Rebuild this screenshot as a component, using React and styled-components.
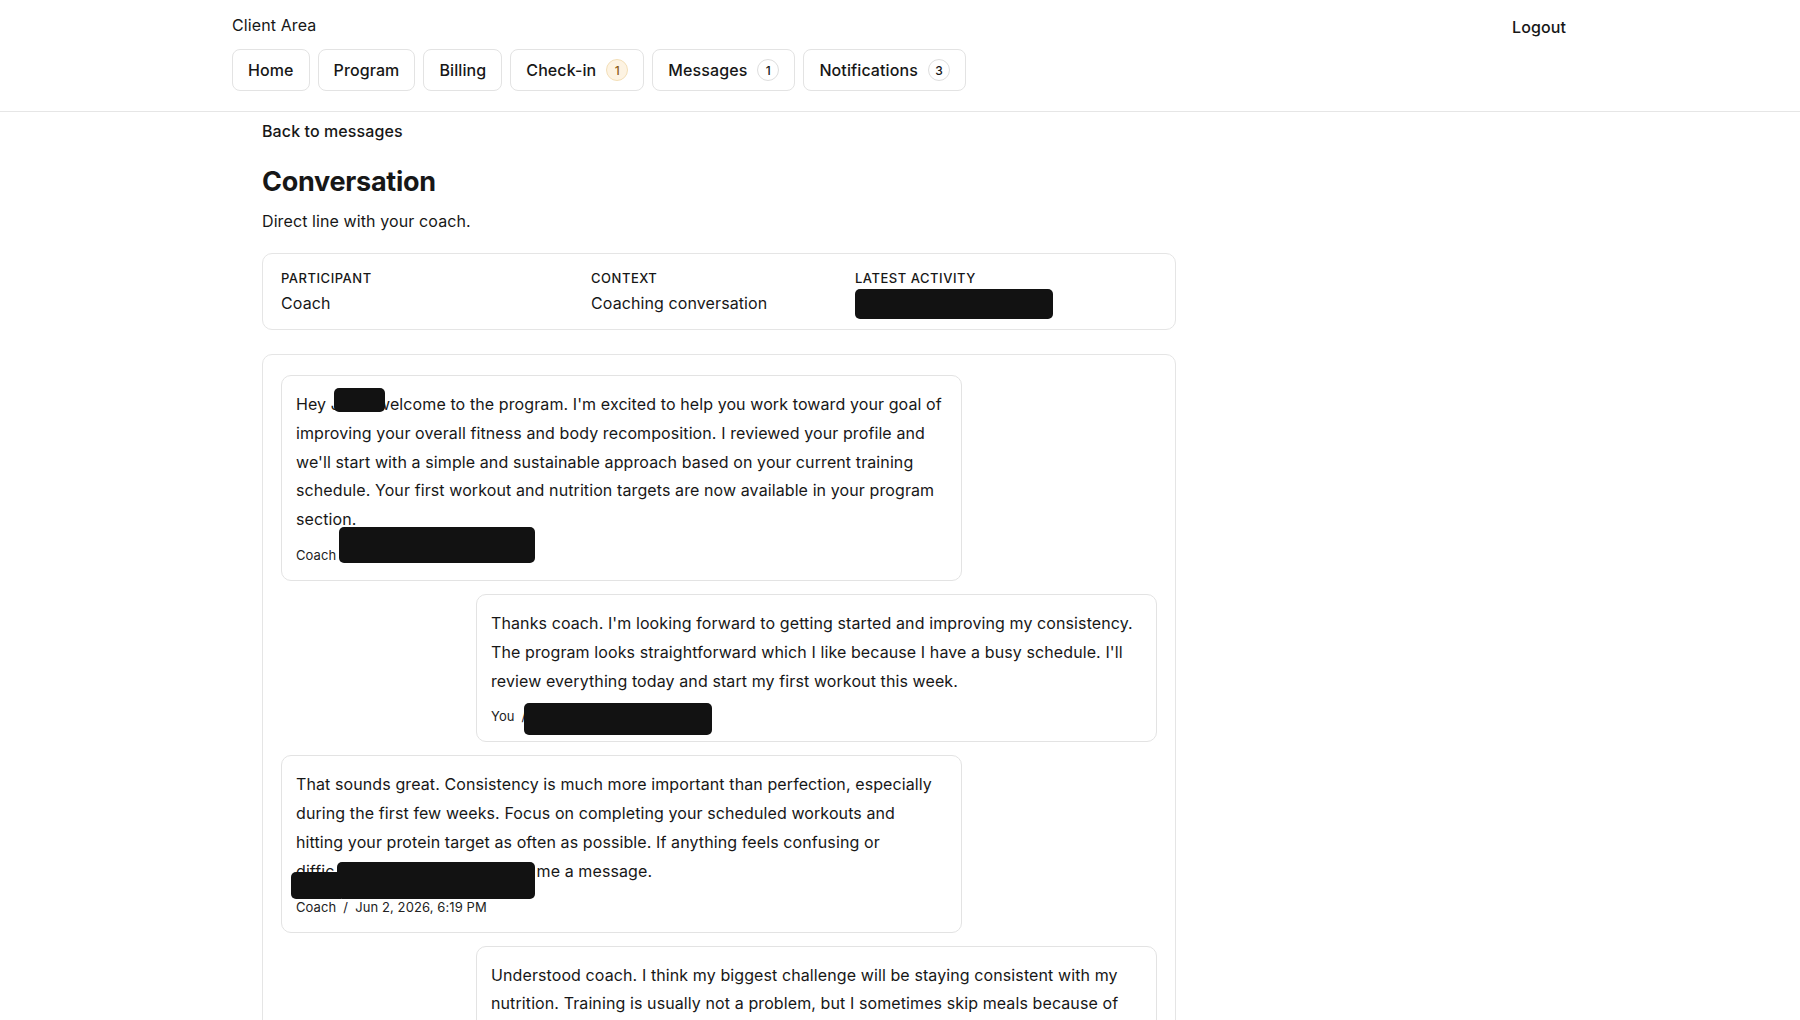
import React from "react";
import styled, { createGlobalStyle, css } from "styled-components";

const GlobalStyle = createGlobalStyle`
  * { box-sizing: border-box; }
  body {
    margin: 0;
    background: #fff;
    color: #171717;
    font-family: Inter, "Noto Sans", "Liberation Sans", sans-serif;
    font-size: 16px;
    letter-spacing: 0.1px;
  }
`;

const Header = styled.header`
  border-bottom: 1px solid #e6e6e6;
`;

const HeaderInner = styled.div`
  max-width: 1400px;
  margin: 0 auto;
  padding: 13px 32px 20px;
  display: flex;
  justify-content: space-between;
  align-items: flex-start;
`;

const Brand = styled.div`
  font-size: 16px;
  line-height: 24px;
  margin-bottom: 12px;
`;

const Nav = styled.nav`
  display: flex;
  gap: 8px;
`;

const NavButton = styled.a`
  display: inline-flex;
  align-items: center;
  gap: 10px;
  height: 42px;
  padding: 0 15px;
  border: 1px solid #e3e3e3;
  border-radius: 8px;
  background: #fff;
  color: #171717;
  font-size: 16px;
  font-weight: 500;
  text-decoration: none;
  white-space: nowrap;
`;

const Badge = styled.span`
  display: inline-flex;
  align-items: center;
  justify-content: center;
  width: 22px;
  height: 22px;
  border-radius: 50%;
  font-size: 12px;
  font-weight: 500;
  border: 1px solid #dedede;
  background: #fff;
  color: #171717;
  ${p =>
    p.$tone === "warn" &&
    css`
      background: #fdf3e2;
      border-color: #f3dfb8;
      color: #8a5a16;
    `}
`;

const Logout = styled.a`
  font-size: 16px;
  font-weight: 500;
  line-height: 24px;
  margin: 2px 2px 0 0;
  color: #171717;
  text-decoration: none;
`;

const Main = styled.main`
  max-width: 1400px;
  margin: 0 auto;
  padding: 7px 32px 40px 62px;
`;

const Column = styled.div`
  max-width: 914px;
`;

const BackLink = styled.a`
  display: inline-block;
  font-size: 16px;
  font-weight: 500;
  line-height: 24px;
  color: #171717;
  text-decoration: none;
`;

const Title = styled.h1`
  margin: 22px 0 0;
  font-size: 27px;
  line-height: 34px;
  font-weight: 700;
  letter-spacing: -0.01em;
`;

const Subtitle = styled.p`
  margin: 10px 0 0;
  font-size: 16px;
  line-height: 24px;
`;

const Card = styled.section`
  border: 1px solid #e5e5e5;
  border-radius: 10px;
  background: #fff;
`;

const MetaCard = styled(Card)`
  margin-top: 20px;
  padding: 15px 18px 14px;
  display: grid;
  grid-template-columns: 310px 264px 1fr;
`;

const MetaLabel = styled.div`
  font-size: 13px;
  line-height: 18px;
  font-weight: 500;
  letter-spacing: 0.04em;
  text-transform: uppercase;
`;

const MetaValue = styled.div`
  margin-top: 4px;
  font-size: 16px;
  line-height: 24px;
`;

const Thread = styled(Card)`
  margin-top: 24px;
  padding: 20px 18px;
  display: flex;
  flex-direction: column;
  gap: 13px;
`;

const Bubble = styled.article`
  max-width: 681px;
  align-self: ${p => (p.$mine ? "flex-end" : "flex-start")};
  border: 1px solid #e3e3e3;
  border-radius: 10px;
  background: #fff;
  padding: 14px 17px 16px 14px;
`;

const BubbleText = styled.p`
  margin: 0;
  font-size: 16px;
  line-height: 28.8px;
`;

const NoWrap = styled.span`
  white-space: nowrap;
`;

const BubbleMeta = styled.div`
  margin-top: 12px;
  font-size: 13px;
  line-height: 18px;
  color: #222;
`;

const Sep = styled.span`
  margin: 0 7px;
`;

/* black blocks that hide personal details */
const Redact = styled.span`
  position: relative;
  display: inline-block;
  width: ${p => p.$w}px;
  height: 1em;
  vertical-align: middle;
  margin-left: ${p => p.$ml || 0}px;
  margin-right: ${p => p.$mr || 0}px;

  &::after {
    content: "";
    position: absolute;
    left: 0;
    right: 0;
    top: ${p => p.$top}px;
    height: ${p => p.$h}px;
    background: #121212;
    border-radius: 5px;
  }

  ${p =>
    p.$tail &&
    css`
      &::before {
        content: "";
        position: absolute;
        left: -${p.$tail}px;
        width: ${p.$tail + 4}px;
        top: ${p.$top + 10}px;
        height: ${p.$h - 10}px;
        background: #121212;
        border-radius: 5px 0 0 5px;
      }
    `}
`;

const navItems = [
  { label: "Home" },
  { label: "Program" },
  { label: "Billing" },
  { label: "Check-in", count: 1, tone: "warn" },
  { label: "Messages", count: 1 },
  { label: "Notifications", count: 3 }
];

export default function App() {
  return (
    <>
      <GlobalStyle />
      <Header>
        <HeaderInner>
          <div>
            <Brand>Client Area</Brand>
            <Nav>
              {navItems.map(item => (
                <NavButton key={item.label} href="#">
                  {item.label}
                  {item.count != null && <Badge $tone={item.tone}>{item.count}</Badge>}
                </NavButton>
              ))}
            </Nav>
          </div>
          <Logout href="#">Logout</Logout>
        </HeaderInner>
      </Header>

      <Main>
        <Column>
          <BackLink href="#">Back to messages</BackLink>
          <Title>Conversation</Title>
          <Subtitle>Direct line with your coach.</Subtitle>

          <MetaCard>
            <div>
              <MetaLabel>Participant</MetaLabel>
              <MetaValue>Coach</MetaValue>
            </div>
            <div>
              <MetaLabel>Context</MetaLabel>
              <MetaValue>Coaching conversation</MetaValue>
            </div>
            <div>
              <MetaLabel>Latest activity</MetaLabel>
              <MetaValue>
                <Redact $w={198} $h={30} $top={-8} />
              </MetaValue>
            </div>
          </MetaCard>

          <Thread>
            <Bubble>
              <BubbleText>
                <NoWrap>
                  Hey J<Redact $w={51} $h={24} $top={-10} $ml={-6} $mr={-8} />welcome
                </NoWrap>{" "}
                to the program. I'm excited to help you work toward your goal of improving your overall
                fitness and body recomposition. I reviewed your profile and we'll start with a simple
                and sustainable approach based on your current training schedule. Your first workout
                and nutrition targets are now available in your program section.
              </BubbleText>
              <BubbleMeta>
                Coach<Redact $w={196} $h={36} $top={-23} $ml={3} />
              </BubbleMeta>
            </Bubble>

            <Bubble $mine>
              <BubbleText>
                Thanks coach. I'm looking forward to getting started and improving my consistency. The
                program looks straightforward which I like because I have a busy schedule. I'll review
                everything today and start my first workout this week.
              </BubbleText>
              <BubbleMeta>
                You<Sep>/</Sep>
                <Redact $w={188} $h={32} $top={-8} $ml={-9} />
              </BubbleMeta>
            </Bubble>

            <Bubble>
              <BubbleText>
                That sounds great. Consistency is much more important than perfection, especially during
                the first few weeks. Focus on completing your scheduled workouts and hitting your protein
                target as often as possible. If anything feels confusing or{" "}
                <NoWrap>
                  diffic<Redact $w={198} $h={37} $top={-2} $ml={2} $mr={2} $tail={46} />me
                </NoWrap>{" "}
                a message.
              </BubbleText>
              <BubbleMeta>
                Coach<Sep>/</Sep>Jun 2, 2026, 6:19 PM
              </BubbleMeta>
            </Bubble>

            <Bubble $mine>
              <BubbleText>
                Understood coach. I think my biggest challenge will be staying consistent with my
                nutrition. Training is usually not a problem, but I sometimes skip meals because of work
                and end up eating late in the evening.
              </BubbleText>
              <BubbleMeta>
                You<Sep>/</Sep>Jun 2, 2026, 7:04 PM
              </BubbleMeta>
            </Bubble>
          </Thread>
        </Column>
      </Main>
    </>
  );
}
